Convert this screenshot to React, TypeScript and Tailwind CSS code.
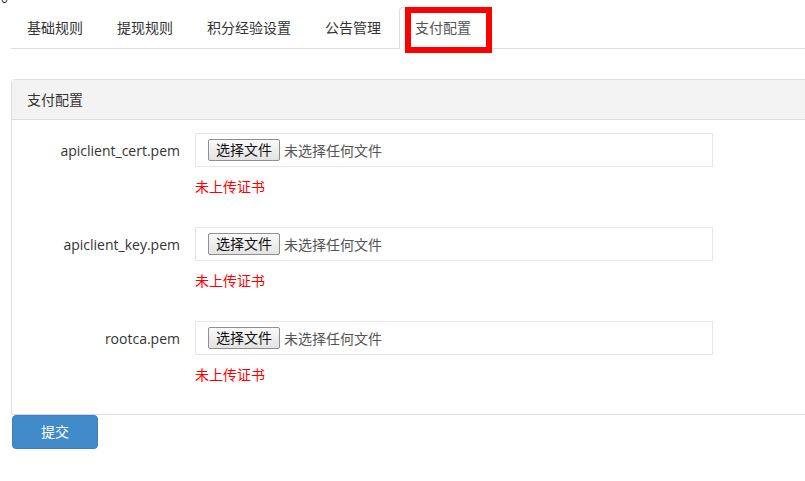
import React from 'react'

const font = "font-['Open_Sans','Noto_Sans_CJK_SC',sans-serif]"

const tabs = ['基础规则', '提现规则', '积分经验设置', '公告管理', '支付配置']

const certs = ['apiclient_cert.pem', 'apiclient_key.pem', 'rootca.pem']

export default function App() {
  return (
    <div className={`w-[805px] h-[481px] overflow-hidden bg-white text-[14px] text-[#333] ${font}`}>
      {/* clipped stray glyph at the very top */}
      <div className="h-[7px] overflow-hidden pl-[1px]">
        <div className="-mt-[9px] text-[12px] leading-[15px] text-[#333]">0</div>
      </div>

      {/* Tabs */}
      <ul className="flex ml-[11px] border-b border-[#ddd] w-[900px]">
        {tabs.map((t, i) => {
          const active = i === tabs.length - 1
          return (
            <li key={t} className="relative mr-[2px] -mb-px">
              <a
                className={
                  active
                    ? 'block px-[15px] py-[10px] leading-5 text-[#555] bg-white border border-[#ddd] border-b-white rounded-t-[4px]'
                    : 'block px-[15px] py-[10px] leading-5 text-[#333] border border-transparent rounded-t-[4px]'
                }
              >
                {t}
              </a>
              {active && (
                <div className="absolute left-[6px] top-0 w-[87px] h-[46px] border-[6px] border-[#ff0000]" />
              )}
            </li>
          )
        })}
      </ul>

      {/* Panel */}
      <div className="ml-[11px] mt-[30px] w-[900px] border border-[#ddd] rounded-t-[4px]">
        <div className="h-[40px] px-[15px] flex items-center bg-[#f3f3f3] border-b border-[#ddd] leading-5">
          支付配置
        </div>
        <div className="pt-[13px]">
          {certs.map((name) => (
            <div key={name} className="flex mb-[30px] last:mb-[29px]">
              <div className="w-[168px] h-[34px] flex items-center justify-end text-[#333]">{name}</div>
              <div className="ml-[15px] flex flex-col">
                <div className="w-[518px] h-[34px] border border-[#e5e6e7] flex items-center pl-[12px]">
                  <span className="h-[22px] w-[72px] flex items-center justify-center bg-gradient-to-b from-[#fafafa] to-[#e3e3e3] border border-[#8f8f8f] rounded-[2px] text-[#111] leading-none">
                    选择文件
                  </span>
                  <span className="ml-[4px] text-[#555]">未选择任何文件</span>
                </div>
                <div className="mt-[10px] leading-5 text-[#ff0000]">未上传证书</div>
              </div>
            </div>
          ))}
        </div>
      </div>

      <button className="ml-[12px] w-[86px] h-[34px] bg-[#428bca] border border-[#3a7fbf] rounded-[4px] text-white leading-5">
        提交
      </button>
    </div>
  )
}
